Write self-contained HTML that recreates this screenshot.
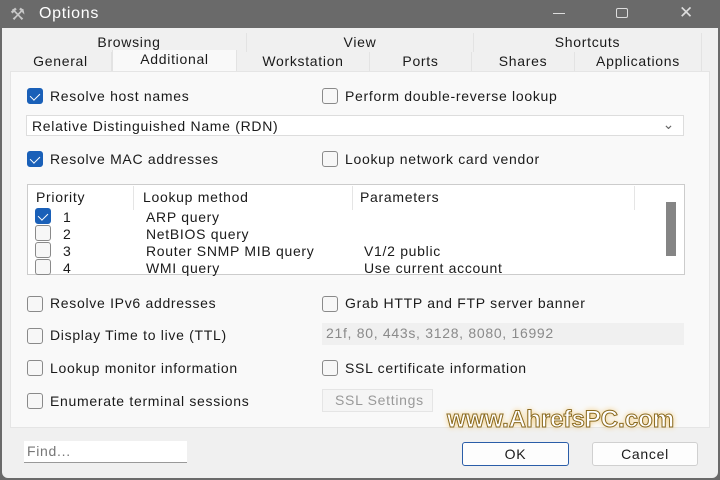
<!DOCTYPE html>
<html><head><style>
*{box-sizing:border-box;margin:0;padding:0}
body{width:720px;height:480px;background:#6a6a6a;font-family:"Liberation Sans",sans-serif;font-size:14px;letter-spacing:0.7px;color:#1a1a1a;position:relative;overflow:hidden}
.win{position:absolute;left:2px;top:28px;width:716px;height:450px;background:#f0f0f0;border-radius:0 0 6px 6px}
.a{position:absolute;white-space:nowrap}
.tab{position:absolute;text-align:center;font-size:14px;line-height:19px;border-right:1px solid #e3e3e3;background:#f0f0f0}
.cb{position:absolute;width:16px;height:16px;border:1px solid #8a8a8a;border-radius:3px;background:#f7f7f7}
.cb.on{background:#1a60b8;border-color:#1a60b8}
.cb.on:after{content:"";position:absolute;left:4px;top:2px;width:5px;height:8px;border:solid #fff;border-width:0 1.5px 1.5px 0;transform:rotate(45deg)}
.panel{position:absolute;left:8px;top:43px;width:700px;height:357px;background:#f9f9f9;border:1px solid #e5e5e5}
</style></head><body>
<div class="a" style="left:10px;top:5px;color:#c8c8c8;font-size:17px">⚒</div>
<div class="a" style="left:39px;top:5px;color:#fff;font-size:16px">Options</div>
<div class="a" style="left:553px;top:13px;width:12px;height:1px;background:#ddd"></div>
<div class="a" style="left:616px;top:8px;width:12px;height:10px;border:1px solid #ddd;border-radius:2px"></div>
<div class="a" style="left:679px;top:3px;color:#ddd;font-size:17px">✕</div>
<div class="win">
 <div class="tab" style="left:10px;top:5px;width:235px">Browsing</div>
 <div class="tab" style="left:245px;top:5px;width:227px">View</div>
 <div class="tab" style="left:472px;top:5px;width:228px">Shortcuts</div>
 <div class="tab" style="left:8px;top:24px;width:102px">General</div>
 <div class="tab" style="left:110px;top:22px;width:125px;background:#f9f9f9;height:22px;border-left:1px solid #e3e3e3">Additional</div>
 <div class="tab" style="left:235px;top:24px;width:133px">Workstation</div>
 <div class="tab" style="left:368px;top:24px;width:102px">Ports</div>
 <div class="tab" style="left:470px;top:24px;width:103px">Shares</div>
 <div class="tab" style="left:573px;top:24px;width:127px">Applications</div>
 <div class="panel"></div>
</div>
<div class="cb on" style="left:27px;top:88px"></div><div class="a" style="left:50px;top:88px">Resolve host names</div>
<div class="cb" style="left:322px;top:88px"></div><div class="a" style="left:345px;top:88px">Perform double-reverse lookup</div>
<div class="a" style="left:26px;top:115px;width:658px;height:21px;background:#fff;border:1px solid #ddd;padding:2px 5px">Relative Distinguished Name (RDN)<span style="position:absolute;right:8px;top:0;color:#666">⌄</span></div>
<div class="cb on" style="left:27px;top:151px"></div><div class="a" style="left:50px;top:151px">Resolve MAC addresses</div>
<div class="cb" style="left:322px;top:151px"></div><div class="a" style="left:345px;top:151px">Lookup network card vendor</div>
<div class="a" style="left:27px;top:184px;width:658px;height:91px;background:#fff;border:1px solid #ccc"></div>
<div class="a" style="left:133px;top:186px;width:1px;height:24px;background:#e5e5e5"></div>
<div class="a" style="left:352px;top:186px;width:1px;height:24px;background:#e5e5e5"></div>
<div class="a" style="left:634px;top:186px;width:1px;height:24px;background:#e5e5e5"></div>
<div class="a" style="left:666px;top:202px;width:10px;height:54px;background:#858585"></div>
<div class="a" style="left:36px;top:189px">Priority</div>
<div class="a" style="left:143px;top:189px">Lookup method</div>
<div class="a" style="left:360px;top:189px">Parameters</div>
<div class="cb on" style="left:35px;top:208px"></div><div class="a" style="left:63px;top:209px">1</div><div class="a" style="left:146px;top:209px">ARP query</div>
<div class="cb" style="left:35px;top:225px"></div><div class="a" style="left:63px;top:226px">2</div><div class="a" style="left:146px;top:226px">NetBIOS query</div>
<div class="cb" style="left:35px;top:242px"></div><div class="a" style="left:63px;top:243px">3</div><div class="a" style="left:146px;top:243px">Router SNMP MIB query</div><div class="a" style="left:364px;top:243px">V1/2 public</div>
<div class="cb" style="left:35px;top:259px"></div><div class="a" style="left:63px;top:260px">4</div><div class="a" style="left:146px;top:260px">WMI query</div><div class="a" style="left:364px;top:260px">Use current account</div>
<div class="cb" style="left:27px;top:296px"></div><div class="a" style="left:50px;top:295px">Resolve IPv6 addresses</div>
<div class="cb" style="left:322px;top:296px"></div><div class="a" style="left:345px;top:295px">Grab HTTP and FTP server banner</div>
<div class="cb" style="left:27px;top:328px"></div><div class="a" style="left:50px;top:327px">Display Time to live (TTL)</div>
<div class="a" style="left:322px;top:323px;width:362px;height:22px;background:#f0f0f0;padding:2px 4px;color:#8a8a8a">21f, 80, 443s, 3128, 8080, 16992</div>
<div class="cb" style="left:27px;top:360px"></div><div class="a" style="left:50px;top:360px">Lookup monitor information</div>
<div class="cb" style="left:322px;top:360px"></div><div class="a" style="left:345px;top:360px">SSL certificate information</div>
<div class="cb" style="left:27px;top:393px"></div><div class="a" style="left:50px;top:393px">Enumerate terminal sessions</div>
<div class="a" style="left:322px;top:389px;width:111px;height:23px;background:#f5f5f5;border:1px solid #e5e5e5;padding:2px 12px;color:#999">SSL Settings</div>
<div class="a" style="left:447px;top:406px;font-size:24px;letter-spacing:0;font-weight:bold;color:#fff;-webkit-text-stroke:1px #8a6a20;text-shadow:0 0 6px #f0c060">www.AhrefsPC.com</div>
<div class="a" style="left:24px;top:441px;width:163px;height:22px;background:#fff;border-bottom:1px solid #999;padding:2px 3px;color:#777">Find...</div>
<div class="a" style="left:462px;top:442px;width:107px;height:24px;background:#fdfdfd;border:1px solid #2a5da8;border-radius:3px;text-align:center;line-height:22px">OK</div>
<div class="a" style="left:592px;top:442px;width:106px;height:24px;background:#fdfdfd;border:1px solid #d0d0d0;border-radius:3px;text-align:center;line-height:22px">Cancel</div>
</body></html>
